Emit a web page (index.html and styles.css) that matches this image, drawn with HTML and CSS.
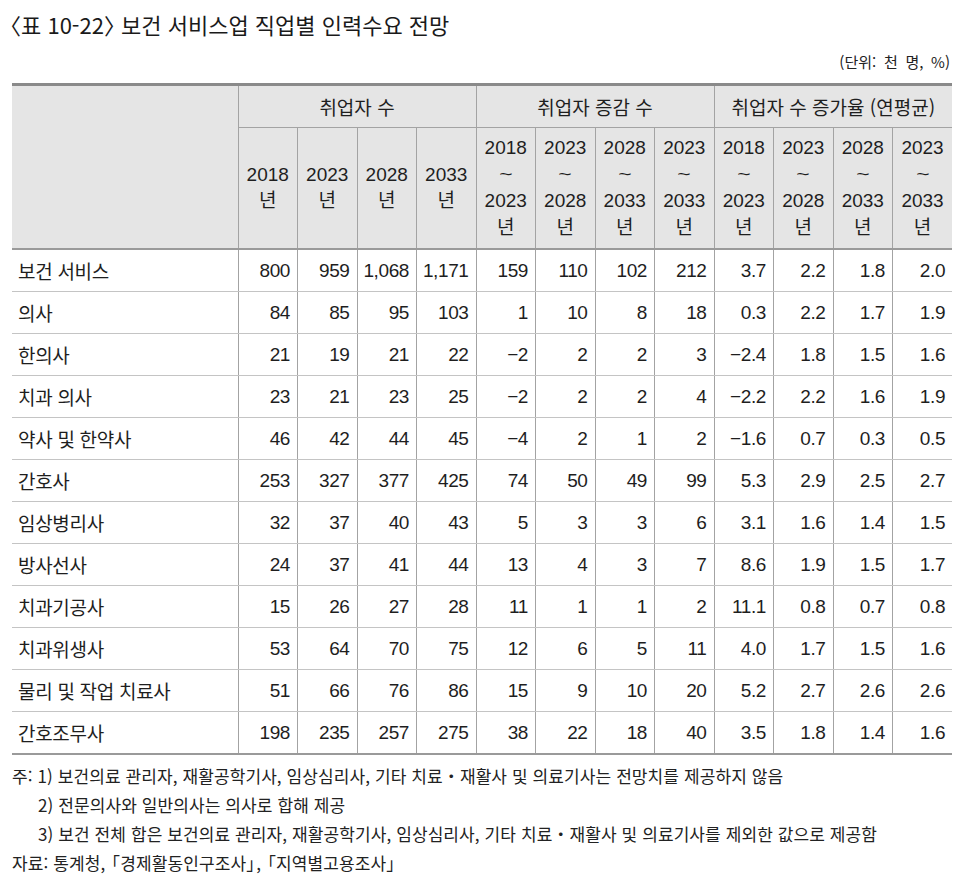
FILE: index.html
```html
<!DOCTYPE html>
<html lang="ko">
<head>
<meta charset="utf-8">
<title>표 10-22 보건 서비스업 직업별 인력수요 전망</title>
<link rel="stylesheet" href="styles.css">
</head>
<body>
<div class="page">
  <h1 class="title"><span class="br-o">〈</span>표 10-22<span class="br-c">〉</span> 보건 서비스업 직업별 인력수요 전망</h1>
  <div class="unit">(단위: 천 명, %)</div>
  <table class="tbl">
    <colgroup>
      <col class="c-label">
      <col class="c-num"><col class="c-num"><col class="c-num"><col class="c-num">
      <col class="c-num"><col class="c-num"><col class="c-num"><col class="c-num">
      <col class="c-num"><col class="c-num"><col class="c-num"><col class="c-num">
    </colgroup>
    <thead>
      <tr class="h-group">
        <th rowspan="2" class="h-blank"></th>
        <th colspan="4">취업자 수</th>
        <th colspan="4">취업자 증감 수</th>
        <th colspan="4">취업자 수 증가율 (연평균)</th>
      </tr>
      <tr class="h-year">
        <th>2018<br>년</th>
        <th>2023<br>년</th>
        <th>2028<br>년</th>
        <th>2033<br>년</th>
        <th>2018<br><span class="tl">~</span><br>2023<br>년</th>
        <th>2023<br><span class="tl">~</span><br>2028<br>년</th>
        <th>2028<br><span class="tl">~</span><br>2033<br>년</th>
        <th>2023<br><span class="tl">~</span><br>2033<br>년</th>
        <th>2018<br><span class="tl">~</span><br>2023<br>년</th>
        <th>2023<br><span class="tl">~</span><br>2028<br>년</th>
        <th>2028<br><span class="tl">~</span><br>2033<br>년</th>
        <th>2023<br><span class="tl">~</span><br>2033<br>년</th>
      </tr>
    </thead>
    <tbody>
      <tr><td class="lbl">보건 서비스</td><td>800</td><td>959</td><td>1,068</td><td>1,171</td><td>159</td><td>110</td><td>102</td><td>212</td><td>3.7</td><td>2.2</td><td>1.8</td><td>2.0</td></tr>
      <tr><td class="lbl">의사</td><td>84</td><td>85</td><td>95</td><td>103</td><td>1</td><td>10</td><td>8</td><td>18</td><td>0.3</td><td>2.2</td><td>1.7</td><td>1.9</td></tr>
      <tr><td class="lbl">한의사</td><td>21</td><td>19</td><td>21</td><td>22</td><td>−2</td><td>2</td><td>2</td><td>3</td><td>−2.4</td><td>1.8</td><td>1.5</td><td>1.6</td></tr>
      <tr><td class="lbl">치과 의사</td><td>23</td><td>21</td><td>23</td><td>25</td><td>−2</td><td>2</td><td>2</td><td>4</td><td>−2.2</td><td>2.2</td><td>1.6</td><td>1.9</td></tr>
      <tr><td class="lbl">약사 및 한약사</td><td>46</td><td>42</td><td>44</td><td>45</td><td>−4</td><td>2</td><td>1</td><td>2</td><td>−1.6</td><td>0.7</td><td>0.3</td><td>0.5</td></tr>
      <tr><td class="lbl">간호사</td><td>253</td><td>327</td><td>377</td><td>425</td><td>74</td><td>50</td><td>49</td><td>99</td><td>5.3</td><td>2.9</td><td>2.5</td><td>2.7</td></tr>
      <tr><td class="lbl">임상병리사</td><td>32</td><td>37</td><td>40</td><td>43</td><td>5</td><td>3</td><td>3</td><td>6</td><td>3.1</td><td>1.6</td><td>1.4</td><td>1.5</td></tr>
      <tr><td class="lbl">방사선사</td><td>24</td><td>37</td><td>41</td><td>44</td><td>13</td><td>4</td><td>3</td><td>7</td><td>8.6</td><td>1.9</td><td>1.5</td><td>1.7</td></tr>
      <tr><td class="lbl">치과기공사</td><td>15</td><td>26</td><td>27</td><td>28</td><td>11</td><td>1</td><td>1</td><td>2</td><td>11.1</td><td>0.8</td><td>0.7</td><td>0.8</td></tr>
      <tr><td class="lbl">치과위생사</td><td>53</td><td>64</td><td>70</td><td>75</td><td>12</td><td>6</td><td>5</td><td>11</td><td>4.0</td><td>1.7</td><td>1.5</td><td>1.6</td></tr>
      <tr><td class="lbl">물리 및 작업 치료사</td><td>51</td><td>66</td><td>76</td><td>86</td><td>15</td><td>9</td><td>10</td><td>20</td><td>5.2</td><td>2.7</td><td>2.6</td><td>2.6</td></tr>
      <tr><td class="lbl">간호조무사</td><td>198</td><td>235</td><td>257</td><td>275</td><td>38</td><td>22</td><td>18</td><td>40</td><td>3.5</td><td>1.8</td><td>1.4</td><td>1.6</td></tr>
    </tbody>
  </table>
  <div class="notes">
    <p class="note">주: 1) 보건의료 관리자, 재활공학기사, 임상심리사, 기타 치료・재활사 및 의료기사는 전망치를 제공하지 않음</p>
    <p class="note indent">2) 전문의사와 일반의사는 의사로 합해 제공</p>
    <p class="note indent">3) 보건 전체 합은 보건의료 관리자, 재활공학기사, 임상심리사, 기타 치료・재활사 및 의료기사를 제외한 값으로 제공함</p>
    <p class="note">자료: 통계청, <span class="lb">「</span>경제활동인구조사<span class="rb">」</span>, <span class="lb">「</span>지역별고용조사<span class="rb">」</span></p>
  </div>
</div>
</body>
</html>
```

FILE: styles.css
```css
html, body {
  margin: 0;
  padding: 0;
  background: #ffffff;
}

body {
  font-family: "Liberation Sans", "Noto Sans CJK KR", sans-serif;
  color: #1e1e1e;
}

.page {
  width: 940px;
  padding: 9px 0 0 12px;
}

.title {
  margin: 0;
  height: 30px;
  font-family: "Noto Sans CJK KR", sans-serif;
  font-weight: 400;
  font-size: 22px;
  line-height: 30px;
  color: #1a1a1a;
  white-space: nowrap;
}

.title .br-o {
  margin-left: -13px;
}

.title .br-c {
  margin-right: -11px;
}

.unit {
  margin-top: 13px;
  height: 20px;
  text-align: right;
  font-family: "Noto Sans CJK KR", sans-serif;
  font-size: 15px;
  line-height: 20px;
  word-spacing: 3.5px;
  padding-right: 2px;
  color: #222;
}

.tbl {
  margin-top: 11px;
  width: 940px;
  border-collapse: collapse;
  table-layout: fixed;
  font-size: 19px;
}

.c-label { width: 226px; }
.c-num { width: 59.5px; }

.tbl thead tr:first-child th {
  border-top: 3px solid #8a8a8a;
}

.tbl th {
  background: #e5e5e5;
  font-weight: 400;
  text-align: center;
  border-left: 1px solid #a3a3a3;
  border-bottom: 1px solid #a3a3a3;
  padding: 0;
  vertical-align: middle;
}

.tbl th.h-blank {
  border-left: none;
  border-bottom: 2px solid #9a9a9a;
}

.h-group th {
  height: 41px;
  font-family: "Noto Sans CJK KR", sans-serif;
  font-size: 19px;
}

.h-year th {
  height: 120px;
  line-height: 26.5px;
  border-bottom: 2px solid #9a9a9a;
}

.tl {
  display: inline-block;
  font-size: 17px;
  line-height: 26px;
  transform: scaleX(1.35);
}

.tbl td {
  height: 41px;
  padding: 0 7px 0 0;
  text-align: right;
  border-left: 1px solid #a3a3a3;
  border-bottom: 1px solid #c4c4c4;
  letter-spacing: -0.4px;
  vertical-align: middle;
}

.tbl td.lbl {
  border-left: none;
  text-align: left;
  padding: 0 0 0 6px;
  font-family: "Noto Sans CJK KR", sans-serif;
  font-size: 19px;
  letter-spacing: -0.3px;
}

.tbl tbody tr:last-child td {
  border-bottom: 2px solid #9a9a9a;
}

.notes {
  margin-top: 6px;
  font-family: "Noto Sans CJK KR", sans-serif;
  font-size: 17px;
  line-height: 29px;
  color: #222;
}

.note {
  margin: 0;
  letter-spacing: 0.1px;
  white-space: nowrap;
}

.note.indent {
  padding-left: 26px;
}

.note .lb {
  margin-left: -7px;
}

.note .rb {
  margin-right: -7px;
}
```
